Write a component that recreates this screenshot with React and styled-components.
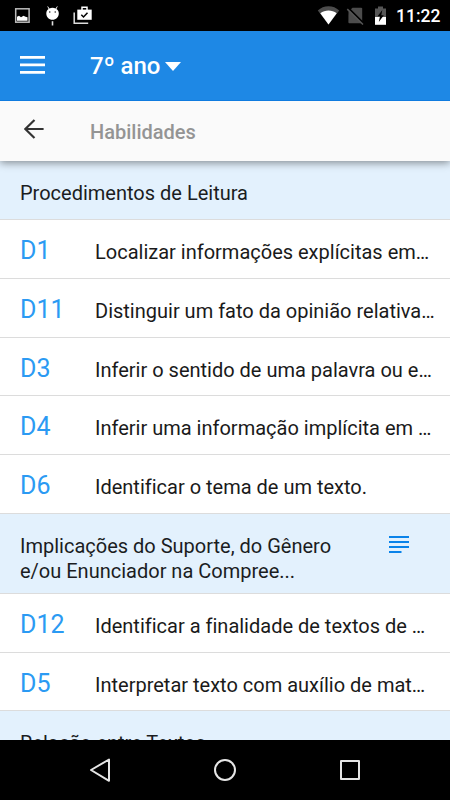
import React from "react";
import styled, { createGlobalStyle } from "styled-components";

const GlobalStyle = createGlobalStyle`
  * {
    box-sizing: border-box;
  }

  body {
    margin: 0;
    background: #000;
    font-family: Roboto, "Noto Sans", sans-serif;
    font-variant-ligatures: none;
  }

  svg {
    display: block;
    flex-shrink: 0;
  }
`;

const Screen = styled.div`
  display: flex;
  flex-direction: column;
  width: 450px;
  height: 800px;
  overflow: hidden;
  background: #fff;
`;

const StatusBar = styled.header`
  display: flex;
  justify-content: space-between;
  height: 31px;
  flex-shrink: 0;
  background: #000;
`;

const Clock = styled.span`
  font-size: 17.5px;
  line-height: 33px;
  font-weight: 500;
  color: #fff;
  width: 55px;
  padding-left: 1px;
`;

const StatusSide = styled.div`
  display: flex;
`;

const AppBar = styled.div`
  position: relative;
  z-index: 2;
  display: flex;
  align-items: center;
  height: 70px;
  flex-shrink: 0;
  padding-left: 20px;
  background: #1e88e5;
  border-bottom: 1px solid #0f7bdf;
`;

const Title = styled.h1`
  margin: 1px 0 0 45px;
  font-size: 24px;
  line-height: 30px;
  font-weight: 500;
  color: #fff;
`;

const Caret = styled.svg`
  margin: 1px 0 0 5px;
`;

const SubBar = styled.div`
  position: relative;
  z-index: 1;
  display: flex;
  height: 59.5px;
  flex-shrink: 0;
  padding-left: 24px;
  background: #fafafa;
  box-shadow: 0 2px 8px rgba(0, 0, 0, 0.42);
`;

const BackIcon = styled.svg`
  margin-top: 18px;
`;

const SubTitle = styled.h2`
  margin: 0 0 0 46px;
  font-size: 20px;
  line-height: 62px;
  font-weight: 500;
  color: #949494;
`;

const List = styled.main`
  flex: 1;
  min-height: 0;
  overflow: hidden;
`;

const Section = styled.div`
  display: flex;
  justify-content: space-between;
  height: ${(props) => (props.$tall ? "80px" : "59.5px")};
  padding: 20px 40px 0 20px;
  background: #e3f1fd;
  border-bottom: 1px solid #dcdcdc;
`;

const SectionTitle = styled.h3`
  margin: 0;
  font-size: 20px;
  line-height: 25px;
  font-weight: 400;
  color: #1b1d1f;
  white-space: pre-line;
`;

const Row = styled.div`
  display: flex;
  align-items: baseline;
  height: 58.75px;
  padding: 16px 0 0 20px;
  background: #fff;
  border-bottom: 1px solid #dcdcdc;
`;

const Code = styled.span`
  width: 75px;
  flex-shrink: 0;
  font-size: 25px;
  line-height: 30px;
  color: #2b9af3;
`;

const Description = styled.span`
  font-size: 20px;
  color: #1a1a1a;
  white-space: nowrap;
`;

const NavBar = styled.nav`
  height: 60px;
  flex-shrink: 0;
  background: #000;
`;

const sections = [
  {
    title: "Procedimentos de Leitura",
    items: [
      ["D1", "Localizar informações explícitas em…"],
      ["D11", "Distinguir um fato da opinião relativa…"],
      ["D3", "Inferir o sentido de uma palavra ou e…"],
      ["D4", "Inferir uma informação implícita em …"],
      ["D6", "Identificar o tema de um texto."],
    ],
  },
  {
    title: "Implicações do Suporte, do Gênero\ne/ou Enunciador na Compree...",
    more: true,
    items: [
      ["D12", "Identificar a finalidade de textos de …"],
      ["D5", "Interpretar texto com auxílio de mat…"],
    ],
  },
  { title: "Relação entre Textos", items: [] },
];

const Notifications = () => (
  <svg width="100" height="31" viewBox="0 0 100 31">
    <rect x="15.7" y="8.8" width="13.4" height="13.4" fill="none" stroke="#bbb" strokeWidth="1.5" />
    <path d="M17 20.8v-4l2-1 2 1.5 2.5-1.5 2 1 2 .5v3.5z" fill="#fff" />
    <path
      d="M46.3 13.5c0-2 .9-3.5 2.3-4.4L47.3 6.6l.6-.4 1.5 2.4a7 7 0 0 1 6.2 0l1.5-2.4.6.4-1.3 2.5c1.5.9 2.4 2.4 2.4 4.4 0 3.5-2.8 6.3-6.3 6.3s-6.2-2.8-6.2-6.3z"
      fill="#fff"
    />
    <circle cx="49.8" cy="12" r=".7" fill="#000" />
    <circle cx="55.2" cy="12" r=".7" fill="#000" />
    <path d="M52.5 21.2v4.3" stroke="#ddd" strokeWidth="1.6" />
    <path d="M74.2 12.5v10.7h14" fill="none" stroke="#ddd" strokeWidth="1.5" />
    <path d="M77.3 9.6h14.4v10.2H77.3z" fill="#fff" />
    <path d="M82 10V7.2h5V10" fill="none" stroke="#fff" strokeWidth="1.5" />
    <path d="M81.3 14.8l2.2 2.2 4-4.2" fill="none" stroke="#000" strokeWidth="1.5" />
  </svg>
);

const SystemIcons = () => (
  <svg width="80" height="31" viewBox="0 0 80 31">
    <path d="M2.8 10.6a15.4 15.4 0 0 1 21.4 0L13.5 24.5z" fill="#4c4c4c" />
    <path d="M5.3 13.3c4.8-3.8 11.6-3.8 16.4 0L13.5 24.5z" fill="#fff" />
    <path d="M33.5 11.5l4-3.7h8.7a1 1 0 0 1 1 1v13.4l-.8 1H34.3a1 1 0 0 1-.9-1z" fill="#4c4c4c" />
    <path d="M33.3 8l16 16" stroke="#000" strokeWidth="1.8" />
    <path d="M32.3 9.1l15.7 15.4" stroke="#555" strokeWidth="1.5" />
    <path d="M60 8.4h3V6.6h5v1.8h3v9.2H60z" fill="#555" />
    <path d="M60 17h11v7.8H60z" fill="#fff" />
    <path d="M67.3 10l-4.7 6.3H65l-1.2 5.8 5-6.9h-2.5z" fill="#000" />
  </svg>
);

const App = () => {
  return (
    <>
      <GlobalStyle />
      <Screen>
        <StatusBar>
          <Notifications />
          <StatusSide>
            <SystemIcons />
            <Clock>11:22</Clock>
          </StatusSide>
        </StatusBar>
        <AppBar>
          <svg width="25" height="19" viewBox="0 0 25 19" fill="#fff">
            <path d="M0 0h25v2.8H0zM0 7.5h25v2.8H0zM0 15h25v2.8H0z" />
          </svg>
          <Title>7º ano</Title>
          <Caret width="16" height="9" viewBox="0 0 16 9">
            <path d="M0 0h16L8 9z" fill="#fff" />
          </Caret>
        </AppBar>
        <SubBar>
          <BackIcon width="20" height="20" viewBox="0 0 20 20">
            <path d="M19.6 10H2M10.5 1L1.3 10l9.2 9" fill="none" stroke="#333" strokeWidth="2.2" />
          </BackIcon>
          <SubTitle>Habilidades</SubTitle>
        </SubBar>
        <List>
          {sections.map((section) => (
            <React.Fragment key={section.title}>
              <Section $tall={section.more}>
                <SectionTitle>{section.title}</SectionTitle>
                {section.more && (
                  <svg width="21" height="20" viewBox="0 0 21 20" fill="#0a83e9">
                    <path d="M0 2h20v2H0zM0 7h20v2H0zM0 12h20v2H0zM0 17h12.5v2H0z" />
                  </svg>
                )}
              </Section>
              {section.items.map(([code, text]) => (
                <Row key={code}>
                  <Code>{code}</Code>
                  <Description>{text}</Description>
                </Row>
              ))}
            </React.Fragment>
          ))}
        </List>
        <NavBar>
          <svg width="450" height="60" viewBox="0 0 450 60" fill="none" stroke="#e6e6e6" strokeWidth="2">
            <path d="M109 19.5v21.3L91 30z" strokeLinejoin="round" />
            <circle cx="225" cy="30" r="10" />
            <rect x="341" y="21" width="18" height="18" strokeLinejoin="round" />
          </svg>
        </NavBar>
      </Screen>
    </>
  );
};

export default App;
